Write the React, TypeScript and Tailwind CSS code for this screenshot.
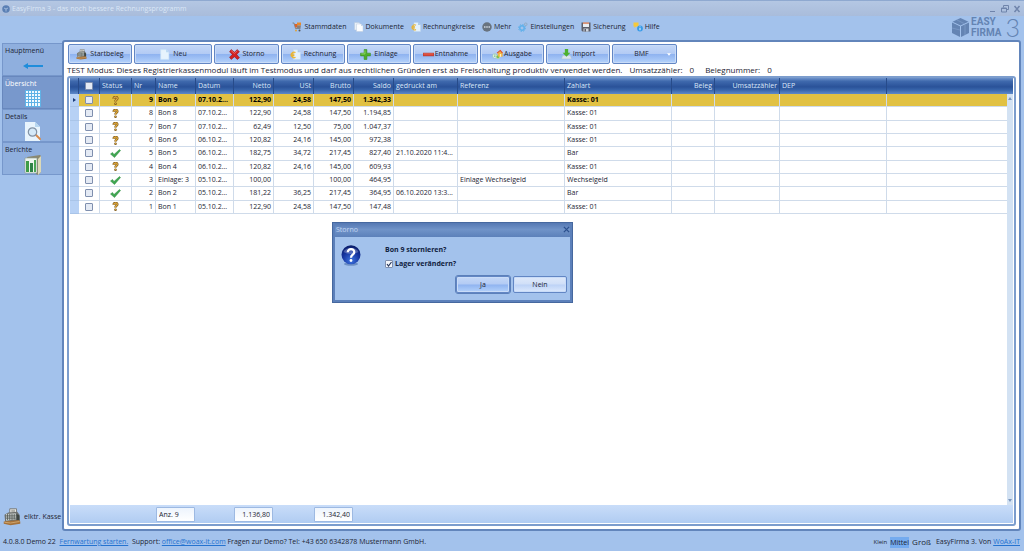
import { useState } from 'react'
import type { ReactNode } from 'react'
import { clsx } from 'clsx'

type Receipt = {
    nr: number
    name: string
    date: string
    net: string
    vat: string
    gross: string
    balance: string
    printed?: string
    reference?: string
    payment: string
    done?: boolean
}

const RECEIPTS: Receipt[] = [
    { nr: 9, name: 'Bon 9', date: '07.10.2...', net: '122,90', vat: '24,58', gross: '147,50', balance: '1.342,33', payment: 'Kasse: 01' },
    { nr: 8, name: 'Bon 8', date: '07.10.2...', net: '122,90', vat: '24,58', gross: '147,50', balance: '1.194,85', payment: 'Kasse: 01' },
    { nr: 7, name: 'Bon 7', date: '07.10.2...', net: '62,49', vat: '12,50', gross: '75,00', balance: '1.047,37', payment: 'Kasse: 01' },
    { nr: 6, name: 'Bon 6', date: '06.10.2...', net: '120,82', vat: '24,16', gross: '145,00', balance: '972,38', payment: 'Kasse: 01' },
    { nr: 5, name: 'Bon 5', date: '06.10.2...', net: '182,75', vat: '34,72', gross: '217,45', balance: '827,40', printed: '21.10.2020 11:4...', payment: 'Bar', done: true },
    { nr: 4, name: 'Bon 4', date: '06.10.2...', net: '120,82', vat: '24,16', gross: '145,00', balance: '609,93', payment: 'Kasse: 01' },
    { nr: 3, name: 'Einlage: 3', date: '05.10.2...', net: '100,00', vat: '', gross: '100,00', balance: '464,95', reference: 'Einlage Wechselgeld', payment: 'Wechselgeld', done: true },
    { nr: 2, name: 'Bon 2', date: '05.10.2...', net: '181,22', vat: '36,25', gross: '217,45', balance: '364,95', printed: '06.10.2020 13:3...', payment: 'Bar', done: true },
    { nr: 1, name: 'Bon 1', date: '05.10.2...', net: '122,90', vat: '24,58', gross: '147,50', balance: '147,48', payment: 'Kasse: 01' },
]

const COLUMNS = [
    { label: 'Status', width: 'w-[32px]' },
    { label: 'Nr', width: 'w-[24px]' },
    { label: 'Name', width: 'w-[40px]' },
    { label: 'Datum', width: 'w-[38px]' },
    { label: 'Netto', width: 'w-[40px]', right: true },
    { label: 'USt', width: 'w-[40px]', right: true },
    { label: 'Brutto', width: 'w-[40px]', right: true },
    { label: 'Saldo', width: 'w-[40px]', right: true },
    { label: 'gedruckt am', width: 'w-[64px]' },
    { label: 'Referenz', width: 'w-[107px]' },
    { label: 'Zahlart', width: 'w-[107px]' },
    { label: 'Beleg', width: 'w-[43px]', right: true },
    { label: 'Umsatzzähler', width: 'w-[65px]', right: true },
    { label: 'DEP', width: 'w-[107px]' },
]

/* ---------- Icons ---------- */

function CartIcon() {
    return (
        <svg viewBox="0 0 20 20" className="size-full">
            <path d="M1 2h3l3 11h10" fill="none" stroke="#777" strokeWidth="1.6" />
            <path d="M5 4h6v7H6.500z" fill="#d9622b" />
            <path d="M10 1h8v6h-8z" fill="#e88a2a" />
            <path d="M10 7h8l-1 5h-7z" fill="#8b7f78" />
            <circle cx="8" cy="17" r="2" fill="#e0a23a" />
            <circle cx="15" cy="17" r="2" fill="#555" />
        </svg>
    )
}

function DocsIcon() {
    return (
        <svg viewBox="0 0 20 20" className="size-full">
            <path d="M1 1h9l4 4v11H1z" fill="#e8f0f8" stroke="#b7c6da" />
            <path d="M5 4h9l4 4v11H5z" fill="#fbfdff" stroke="#bccbdd" />
            <path d="M14 4v4h4z" fill="#c6d6e8" />
        </svg>
    )
}

function PageIcon() {
    return (
        <svg viewBox="0 0 20 20" className="size-full">
            <path d="M3 1h10l5 5v13H3z" fill="#e6f3fd" stroke="#c5dff5" />
            <path d="M13 1v5h5z" fill="#b8d8f2" />
        </svg>
    )
}

function InvoiceIcon() {
    return (
        <svg viewBox="0 0 20 20" className="size-full">
            <path d="M6 1h8l5 5v13H6z" fill="#e4f1fc" stroke="#bcd5ec" />
            <path d="M14 1v5h5z" fill="#a8cbe9" />
            <path d="M10 6.500a5 5 0 1 0 0 8.500M1 9.500h7M1 12h7" fill="none" stroke="#edb52c" strokeWidth="2.200" />
        </svg>
    )
}

function MoreIcon() {
    return (
        <svg viewBox="0 0 20 20" className="size-full">
            <circle cx="10" cy="10" r="9.500" fill="#68737f" />
            <path d="M4 8.500h3v3H4zM8.500 8.500h3v3h-3zM13 8.500h3v3h-3z" fill="#cdd6e0" />
        </svg>
    )
}

function GearsIcon() {
    return (
        <svg viewBox="0 0 20 20" className="size-full" fill="none">
            <circle cx="8" cy="12" r="4.500" stroke="#5fb0ea" strokeWidth="3" />
            <circle cx="8" cy="12" r="7" stroke="#5fb0ea" strokeWidth="2" strokeDasharray="2.700 2.800" />
            <circle cx="15.500" cy="4.500" r="2.600" stroke="#91abc2" strokeWidth="2" />
        </svg>
    )
}

function DiskIcon() {
    return (
        <svg viewBox="0 0 20 20" className="size-full">
            <path d="M1 1h18v18H3l-2-2z" fill="#5d5f6b" />
            <path d="M4 1h12v9H4z" fill="#e9edf3" />
            <path d="M4 1h12v2.500H4z" fill="#d9774e" />
            <path d="M5 13h10v6H5z" fill="#cfd5de" />
            <path d="M7 14h3v5H7z" fill="#5d5f6b" />
        </svg>
    )
}

function HelpIcon() {
    return (
        <svg viewBox="0 0 20 20" className="size-full">
            <path d="M1 1h10v8H6l-3 3V9H1z" fill="#f6c93b" />
            <circle cx="14" cy="13" r="5.800" fill="#379be8" />
            <path d="M14 12v4.500M14 9v1.600" stroke="#fff" strokeWidth="1.900" />
        </svg>
    )
}

function RegisterIcon() {
    return (
        <svg viewBox="0 0 24 24" className="size-full">
            <path d="M9 1h9v9H9z" fill="#e7e7e2" stroke="#68675f" />
            <path d="M11 3h5M11 5h5" stroke="#84867e" />
            <path d="M2 9l5-3 12-1 3 4v8L3 20z" fill="#6d706d" />
            <path d="M4 8l13-1 1 8-14 2z" fill="#c5cbc8" />
            <path d="M6 8v8M9 8v8M12 8v8M15 8v7M4 10.500h13M4 13.500h14" stroke="#4d544f" />
            <path d="M18 8l4 2v7l-4 1z" fill="#3e4642" />
            <path d="M1 18l20-2 2 2v3l-13 2-9-2z" fill="#a5723b" />
            <path d="M2 19l8 1 12-2" fill="none" stroke="#dcb47b" />
        </svg>
    )
}

function CrossIcon() {
    return (
        <svg viewBox="0 0 20 20" className="size-full">
            <path d="M4 1l6 5 5-5 4 4-5 5 5 6-4 3-5-5-6 5-3-4 5-5-5-5z" fill="#d32222" stroke="#8d1518" />
            <path d="M4 3l6 5 5-5" fill="none" stroke="#f1716a" strokeWidth="1.500" />
        </svg>
    )
}

function PlusIcon() {
    return (
        <svg viewBox="0 0 20 20" className="size-full">
            <path d="M7.500 1h5v6.500H19v5h-6.500V19h-5v-6.500H1v-5h6.500z" fill="#4fae2b" stroke="#368a1c" />
            <path d="M9 2.500v6.500H2.500" fill="none" stroke="#96dc6c" strokeWidth="1.500" />
        </svg>
    )
}

function MinusIcon() {
    return (
        <svg viewBox="0 0 20 20" className="size-full">
            <path d="M0 7.500h20v5H0z" fill="#dc3c2c" stroke="#ad3027" />
            <path d="M1 9h18" stroke="#f18a77" />
        </svg>
    )
}

function ExpenseIcon() {
    return (
        <svg viewBox="0 0 24 20" className="size-full">
            <circle cx="6" cy="13" r="5" fill="#eaf6ef" stroke="#7eb2a8" />
            <path d="M4 11h4M4 14h4" stroke="#52a56b" strokeWidth="1.500" />
            <circle cx="13" cy="15" r="4" fill="#7dbd55" stroke="#d8efc4" />
            <path d="M12 6l6-5 5 5v9h-9z" fill="#f5b43b" />
            <path d="M11 7l7-6 5 6" fill="none" stroke="#dc4a2c" strokeWidth="2.200" />
            <path d="M17 9h3v6h-3z" fill="#fff3c6" />
        </svg>
    )
}

function ImportIcon() {
    return (
        <svg viewBox="0 0 20 20" className="size-full">
            <path d="M3 12h14l2 6H1z" fill="#dbe5ee" stroke="#b2c3d3" />
            <path d="M7 0h6v7h4l-7 7-7-7h4z" fill="#4eb12e" />
        </svg>
    )
}

function QuestionIcon() {
    return (
        <svg viewBox="0 0 14 20" className="h-[9px] w-[7px]">
            <path d="M3 6c0-5 8-5 8-1 0 3-4 3-4 7" fill="none" stroke="#6b4b16" strokeWidth="5.500" />
            <circle cx="7" cy="17" r="2.800" fill="#6b4b16" />
            <path d="M3 6c0-5 8-5 8-1 0 3-4 3-4 7" fill="none" stroke="#e3ac3c" strokeWidth="3" />
            <circle cx="7" cy="17" r="1.600" fill="#e3ac3c" />
        </svg>
    )
}

function CheckIcon() {
    return (
        <svg viewBox="0 0 22 18" className="h-[9px] w-[11px]">
            <path d="M1 10l4-3 3 4L19 1l2 2L9 17z" fill="#3fa650" stroke="#2d8c40" />
        </svg>
    )
}

function ArrowLeftIcon() {
    return (
        <svg viewBox="0 0 20 8" className="h-[8px] w-[20px]">
            <path d="M0 4l5-3v2h15v2H5v2z" fill="#1f8ddb" />
        </svg>
    )
}

function GridIcon() {
    return (
        <svg viewBox="0 0 16 17" className="h-[17px] w-[16px]">
            <path d="M0 0h16v17H0z" fill="#5fb2e6" />
            <path
                d="M1 1h2v2H1zM4 1h2v2H4zM7 1h2v2H7zM10 1h2v2h-2zM13 1h2v2h-2zM1 4h2v2H1zM4 4h2v2H4zM7 4h2v2H7zM10 4h2v2h-2zM13 4h2v2h-2zM1 7h2v2H1zM4 7h2v2H4zM7 7h2v2H7zM10 7h2v2h-2zM13 7h2v2h-2zM1 10h2v2H1zM4 10h2v2H4zM7 10h2v2H7zM10 10h2v2h-2zM13 10h2v2h-2zM1 13h2v3H1zM4 13h2v3H4zM7 13h2v3H7zM10 13h2v3h-2zM13 13h2v3h-2z"
                fill="#f2faff"
            />
        </svg>
    )
}

function DetailsIcon() {
    return (
        <svg viewBox="0 0 18 20" className="h-[20px] w-[18px]">
            <path d="M1 0h10l5 5v14H1z" fill="#e8f4fd" />
            <path d="M11 0v5h5z" fill="#b7d7f0" />
            <path d="M12 13l4 4" stroke="#d98a4c" strokeWidth="2" strokeLinecap="round" />
            <circle cx="8.500" cy="10" r="4.200" fill="#d5e9f8" stroke="#8292a5" strokeWidth="1.200" />
        </svg>
    )
}

function ReportsIcon() {
    return (
        <svg viewBox="0 0 18 20" className="h-[20px] w-[18px]">
            <path d="M3 2l13-2 1 1v16l-3 3-2-1z" fill="#8a8870" />
            <path d="M14 4l3-3v16l-3 3z" fill="#dcd9b8" />
            <path d="M1 3h12v15H1z" fill="#eef5ee" stroke="#8c9b90" strokeWidth=".6" />
            <path d="M2 6h3v11H2z" fill="#3e9c47" />
            <path d="M6 8h3v9H6z" fill="#2f8246" />
            <path d="M10 5h2v12h-2z" fill="#4ba655" />
        </svg>
    )
}

function BigQuestionIcon() {
    return (
        <svg viewBox="0 0 40 42" className="h-[21px] w-[20px]">
            <defs>
                <radialGradient id="orb" cx=".5" cy=".8" r=".8">
                    <stop offset="0" stopColor="#3d74e0" />
                    <stop offset=".6" stopColor="#14329c" />
                    <stop offset="1" stopColor="#0a1c66" />
                </radialGradient>
            </defs>
            <ellipse cx="20" cy="38" rx="14" ry="3.500" fill="#6d8fc4" />
            <circle cx="20" cy="19.500" r="19" fill="url(#orb)" />
            <path d="M5 14a16 12 0 0 1 30 0c-8 5-22 5-30 0z" fill="#fff" opacity=".25" />
            <path d="M13.500 14.500c0-9 13.500-8 13 0 0 5-6.500 5-6.500 11" fill="none" stroke="#fff" strokeWidth="4.500" />
            <circle cx="20" cy="31" r="2.800" fill="#fff" />
        </svg>
    )
}

function CubeIcon() {
    return (
        <svg viewBox="0 0 34 38" className="h-[19px] w-[17px]" fill="#6484b3">
            <path d="M17 0l16 7.500L17 15 1 7.500z" />
            <path d="M0 9l16 7.500V38L0 30z" />
            <path d="M34 9l-16 7.500V38l16-8z" />
            <path d="M9 3.500l16 8M0 20l16 4M26 13v21" stroke="#8aa8d4" strokeWidth="1" />
        </svg>
    )
}

/* ---------- Data ---------- */

const MENU = [
    { name: 'Stammdaten', icon: <CartIcon /> },
    { name: 'Dokumente', icon: <DocsIcon /> },
    { name: 'Rechnungkreise', icon: <InvoiceIcon /> },
    { name: 'Mehr', icon: <MoreIcon /> },
    { name: 'Einstellungen', icon: <GearsIcon /> },
    { name: 'Sicherung', icon: <DiskIcon /> },
    { name: 'Hilfe', icon: <HelpIcon /> },
]

const TABS = [
    { name: 'Hauptmenü', icon: <ArrowLeftIcon /> },
    { name: 'Übersicht', icon: <GridIcon /> },
    { name: 'Details', icon: <DetailsIcon /> },
    { name: 'Berichte', icon: <ReportsIcon /> },
]

const ACTIONS = [
    { name: 'Startbeleg', icon: <RegisterIcon />, width: 'w-[64px]', gap: 'gap-[3px]' },
    { name: 'Neu', icon: <PageIcon />, width: 'w-[78px]', gap: 'gap-[3px]' },
    { name: 'Storno', icon: <CrossIcon />, width: 'w-[65px]', gap: 'gap-[3px]' },
    { name: 'Rechnung', icon: <InvoiceIcon />, width: 'w-[64px]', gap: 'gap-[3px]' },
    { name: 'Einlage', icon: <PlusIcon />, width: 'w-[64px]', gap: 'gap-[3px]' },
    { name: 'Entnahme', icon: <MinusIcon />, width: 'w-[65px]', gap: 'gap-[1px]' },
    { name: 'Ausgabe', icon: <ExpenseIcon />, width: 'w-[64px]', gap: 'gap-[1px]' },
    { name: 'Import', icon: <ImportIcon />, width: 'w-[64px]', gap: 'gap-[1px]' },
]

/* ---------- Parts ---------- */

function GlossButton({ children, className, onClick }: { children: ReactNode; className?: string; onClick?: () => void }) {
    return (
        <button
            onClick={onClick}
            className={clsx(
                'flex shrink-0 items-center justify-center rounded-[2px] border border-[#6286c4] shadow-[inset_0_0_0_1px_#c9dcf8]',
                className
            )}
        >
            {children}
        </button>
    )
}

const GLOSS = 'bg-linear-[180deg,#c4d7f7_0%,#b3cbf4_48%,#8fb3f0_52%,#b4d2fb_100%]'

function Checkbox({ label }: { label: string }) {
    return (
        <input
            type="checkbox"
            aria-label={label}
            className="mx-auto block size-[8px] appearance-none rounded-[1px] border border-[#7f8fae] bg-[#e4eaf4] checked:bg-[#3c68b0]"
        />
    )
}

function TitleBar() {
    return (
        <div className="flex h-4 shrink-0 items-center border-t border-[#8fa9d0] bg-linear-to-b from-[#b4c7e3] to-[#a9bcdb] px-[2px]">
            <svg viewBox="0 0 16 16" className="mr-[2px] size-[8px]">
                <circle cx="8" cy="8" r="7.500" fill="#5a7fb4" />
                <path d="M4 6l4 2 4-2M8 8v5" fill="none" stroke="#9fb9dc" strokeWidth="2" />
            </svg>
            <h1 className="flex-1 text-[#dbe7f7]">EasyFirma 3 - das noch bessere Rechnungsprogramm</h1>
            <div className="flex gap-[4px] pr-[1px] text-[#6f84ab]">
                <button aria-label="Minimieren" className="size-[8px]">
                    <svg viewBox="0 0 8 8" className="size-full"><path d="M1 6.500h5" stroke="currentColor" /></svg>
                </button>
                <button aria-label="Verkleinern" className="size-[8px]">
                    <svg viewBox="0 0 8 8" className="size-full" fill="none" stroke="currentColor">
                        <path d="M2.500 2.500v-2h5v4h-2M.5 3h5v4h-5zM.5 3.500h5" />
                    </svg>
                </button>
                <button aria-label="Schließen" className="size-[8px]">
                    <svg viewBox="0 0 8 8" className="size-full"><path d="M1.500 1l5 6M6.500 1l-5 6" stroke="currentColor" strokeWidth="1.500" /></svg>
                </button>
            </div>
        </div>
    )
}

function Header() {
    return (
        <header className="flex h-6 shrink-0 items-center pb-[2px]">
            <nav className="flex flex-1 justify-center gap-[7px]">
                {MENU.map((item) => (
                    <button key={item.name} className="flex items-center gap-[2px]">
                        <span className="size-[10px]">{item.icon}</span>
                        {item.name}
                    </button>
                ))}
            </nav>
            <div className="flex items-center gap-[2px] pr-[4px] text-[#6484b3]">
                <CubeIcon />
                <div className="font-['Roboto'] text-[10px] leading-[11px] font-bold">
                    <div>EASY</div>
                    <div>FIRMA</div>
                </div>
                <div className="pl-[2px] font-['Lato'] text-[25px] leading-[20px] font-light">3</div>
            </div>
        </header>
    )
}

function Sidebar() {
    const [active, setActive] = useState('Übersicht')

    return (
        <aside className="flex w-[62px] shrink-0 flex-col pt-[3px] pl-[2px]">
            {TABS.map((tab) => (
                <button
                    key={tab.name}
                    onClick={() => setActive(tab.name)}
                    className={clsx(
                        'flex h-[33px] flex-col items-center border border-r-0 pt-[1px]',
                        tab.name === active
                            ? 'border-[#6787bd] bg-[#7898cc] text-white'
                            : 'border-[#7697cb] bg-[#8fafde]'
                    )}
                >
                    <span className="w-full pl-[2px] text-left leading-[11px]">{tab.name}</span>
                    <span className="flex h-[20px] items-center">{tab.icon}</span>
                </button>
            ))}
            <div className="mt-auto flex items-center pb-[5px] pl-[1px] whitespace-nowrap">
                <span className="size-[18px]"><RegisterIcon /></span>
                <span className="pl-[3px]">elktr. Kasse</span>
            </div>
        </aside>
    )
}

function Toolbar() {
    return (
        <div className="flex gap-[2px] pl-[1px]">
            {ACTIONS.map((action) => (
                <GlossButton key={action.name} className={clsx('h-[20px]', GLOSS, action.width, action.gap)}>
                    <span className="size-[11px]">{action.icon}</span>
                    {action.name}
                </GlossButton>
            ))}
            <GlossButton className={clsx('h-[20px] w-[65px] gap-[18px] pl-[16px]', GLOSS)}>
                BMF
                <svg viewBox="0 0 6 4" className="h-[3px] w-[4px]"><path d="M0 0h6L3 4z" fill="#fff" /></svg>
            </GlossButton>
        </div>
    )
}

const CELL = 'border-r border-b border-[#cfdbea] px-[2px] py-0 whitespace-nowrap'

function ReceiptTable() {
    return (
        <table className="h-[136px] w-full table-fixed border-separate border-spacing-0 leading-[10px]">
            <thead>
                <tr className="h-[16px] bg-linear-[180deg,#6e93cb_0%,#3f69ad_20%,#2a5299_55%,#3865ab_75%,#5f8aca_100%] text-left text-[#dce8fa]">
                    <th aria-label="Zeile" className="w-[9px] border-r border-[#274b8a] p-0" />
                    <th className="w-[21px] border-r border-[#274b8a] p-0"><Checkbox label="Alle auswählen" /></th>
                    {COLUMNS.map((column) => (
                        <th
                            key={column.label}
                            className={clsx(
                                'border-r border-[#274b8a] px-[2px] py-0 font-normal whitespace-nowrap',
                                column.width,
                                column.right && 'text-right'
                            )}
                        >
                            {column.label}
                        </th>
                    ))}
                    <th aria-label="Leer" className="p-0" />
                </tr>
            </thead>
            <tbody>
                {RECEIPTS.map((row, i) => (
                    <tr key={row.nr} className={clsx(i === 0 ? 'bg-[#e1c143] font-bold text-black' : 'bg-white')}>
                        <td className="border-b border-[#a9c4e8] bg-[#b7d1f5] p-0">
                            {i === 0 && (
                                <svg viewBox="0 0 3 4" className="mx-auto h-[4px] w-[3px]"><path d="M0 0l3 2-3 2z" fill="#1d3c78" /></svg>
                            )}
                        </td>
                        <td className={CELL}><Checkbox label={`${row.name} auswählen`} /></td>
                        <td className={CELL}><span className="flex justify-center">{row.done ? <CheckIcon /> : <QuestionIcon />}</span></td>
                        <td className={clsx(CELL, 'text-right')}>{row.nr}</td>
                        <td className={CELL}>{row.name}</td>
                        <td className={CELL}>{row.date}</td>
                        <td className={clsx(CELL, 'text-right')}>{row.net}</td>
                        <td className={clsx(CELL, 'text-right')}>{row.vat}</td>
                        <td className={clsx(CELL, 'text-right')}>{row.gross}</td>
                        <td className={clsx(CELL, 'text-right')}>{row.balance}</td>
                        <td className={CELL}>{row.printed}</td>
                        <td className={CELL}>{row.reference}</td>
                        <td className={CELL}>{row.payment}</td>
                        <td className={CELL} />
                        <td className={CELL} />
                        <td className={CELL} />
                        <td className={CELL} />
                    </tr>
                ))}
            </tbody>
        </table>
    )
}

function SummaryField({ label, value, right }: { label: string; value: string; right?: boolean }) {
    return (
        <input
            readOnly
            aria-label={label}
            value={value}
            className={clsx(
                'h-[15px] w-[39px] rounded-[1px] border border-[#9db9e2] bg-linear-to-b from-[#edf4fd] to-white px-[2px] outline-none',
                right && 'text-right'
            )}
        />
    )
}

function StornoDialog() {
    const [checked, setChecked] = useState(true)
    const [open, setOpen] = useState(true)

    if (!open) return null

    return (
        <div
            role="dialog"
            aria-label="Storno"
            className="fixed top-[222px] left-[332px] flex w-[241px] flex-col border-[3px] border-t-0 border-[#5c80ba] bg-[#a3c2ec] outline outline-[#46689f] -outline-offset-1"
        >
            <div className="flex h-[15px] items-center justify-between bg-linear-to-b from-[#5275b0] via-[#7093c8] to-[#5c80ba] text-[#c3d6f2]">
                <span className="pl-[1px]">Storno</span>
                <button aria-label="Schließen" onClick={() => setOpen(false)} className="size-[7px]">
                    <svg viewBox="0 0 8 8" className="size-full"><path d="M1 1l6 6M7 1L1 7" stroke="#2b4f8d" strokeWidth="1.500" /></svg>
                </button>
            </div>
            <div className="flex h-[39px] gap-[24px] pt-[8px] pl-[6px]">
                <BigQuestionIcon />
                <div className="flex flex-col gap-[4px] font-bold text-[#10213f]">
                    <p className="leading-[10px]">Bon 9 stornieren?</p>
                    <label className="flex items-center gap-[2px] leading-[10px]">
                        <span className="relative size-[8px]">
                            <input
                                type="checkbox"
                                checked={checked}
                                onChange={(e) => setChecked(e.target.checked)}
                                className="peer block size-[8px] appearance-none rounded-[1px] border border-[#7f8fae] bg-[#f4f7fc]"
                            />
                            <svg viewBox="0 0 8 8" className="pointer-events-none absolute inset-0 hidden peer-checked:block">
                                <path d="M2 4l1.500 2L6.500 2" fill="none" stroke="#26365c" strokeWidth="1.200" />
                            </svg>
                        </span>
                        Lager verändern?
                    </label>
                </div>
            </div>
            <div className="flex justify-end gap-[3px] pr-[3px] pb-[7px]">
                <GlossButton onClick={() => setOpen(false)} className={clsx('h-[17px] w-[54px] outline outline-[#5c80ba]', GLOSS)}>
                    Ja
                </GlossButton>
                <GlossButton onClick={() => setOpen(false)} className="h-[17px] w-[54px] bg-linear-[180deg,#dfe9fa_0%,#d0dff8_48%,#bcd2f6_52%,#dce9fd_100%]">
                    Nein
                </GlossButton>
            </div>
        </div>
    )
}

function StatusBar() {
    return (
        <footer className="flex h-[20px] shrink-0 items-center justify-between pt-[2px] pr-[4px] pl-[3px] whitespace-pre">
            <p>
                4.0.8.0 Demo 22{'  '}
                <a href="#fernwartung" className="text-[#2573d0] underline">Fernwartung starten.</a>
                {'  '}Support:{' '}
                <a href="mailto:office@woax-it.com" className="text-[#2573d0] underline">office@woax-it.com</a>
                {' '}Fragen zur Demo? Tel: +43 650 6342878 Mustermann GmbH.
            </p>
            <div className="flex items-center gap-[3px]">
                <button className="text-[6px]">Klein</button>
                <button className="bg-[#74abef] leading-[11px]">Mittel</button>
                <button className="text-[8px]">Groß</button>
                <p className="pl-[2px]">EasyFirma 3. Von <a href="#woax-it" className="text-[#2573d0] underline">WoAx-IT</a></p>
            </div>
        </footer>
    )
}

export default function App() {
    return (
        <div className="flex h-screen flex-col overflow-hidden bg-[#a3c2ec] font-['Open_Sans','Noto_Sans',sans-serif] text-[7px] leading-[12px] text-[#1c2433]">
            <TitleBar />
            <Header />
            <div className="flex min-h-0 flex-1">
                <Sidebar />
                <main className="mr-[3px] flex min-w-0 flex-1 flex-col rounded-[3px] border-2 border-[#6285bb] bg-white px-[3px] pt-[2px] pb-[3px]">
                    <Toolbar />
                    <p className="flex h-[12px] items-center gap-[7px] text-[8px] whitespace-nowrap">
                        <span>TEST Modus: Dieses Registrierkassenmodul läuft im Testmodus und darf aus rechtlichen Gründen erst ab Freischaltung produktiv verwendet werden.</span>
                        <span>Umsatzzähler:</span>
                        <span>0</span>
                        <span className="pl-[4px]">Belegnummer:</span>
                        <span>0</span>
                    </p>
                    <section className="flex min-h-0 flex-1 flex-col rounded-[3px] border-2 border-[#7c9dcd] px-px pb-px">
                        <div className="relative min-h-0 flex-1">
                            <ReceiptTable />
                            <div className="absolute top-[16px] right-0 bottom-0 flex w-[6px] flex-col items-center justify-between bg-[#d3e2f3] py-[3px]">
                                <svg viewBox="0 0 4 3" className="h-[3px] w-[4px]"><path d="M0 3h4L2 0z" fill="#7a96be" /></svg>
                                <svg viewBox="0 0 4 3" className="h-[3px] w-[4px]"><path d="M0 0h4L2 3z" fill="#7a96be" /></svg>
                            </div>
                        </div>
                        <div className="flex h-[18px] items-center bg-linear-to-b from-[#c9ddf9] to-[#b0ccf2] pl-[86px]">
                            <SummaryField label="Anzahl" value="Anz. 9" />
                            <div className="flex gap-[41px] pl-[39px]">
                                <SummaryField label="Summe Netto" value="1.136,80" right />
                                <SummaryField label="Summe Brutto" value="1.342,40" right />
                            </div>
                        </div>
                    </section>
                </main>
            </div>
            <StatusBar />
            <StornoDialog />
        </div>
    )
}
